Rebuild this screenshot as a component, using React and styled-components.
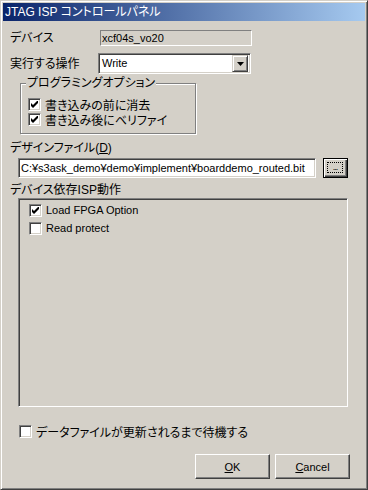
import React from 'react';
import styled, { createGlobalStyle } from 'styled-components';

const FONT = `"Liberation Sans", "Noto Sans CJK JP", sans-serif`;

const GlobalStyle = createGlobalStyle`
  html, body { margin: 0; padding: 0; background: #d4d0c8; }
  body {
    font-family: ${FONT};
    font-size: 12px;
    color: #000;
    font-feature-settings: "palt";
  }
  * { box-sizing: border-box; }
`;

const Window = styled.div`
  width: 368px;
  height: 490px;
  border: 1px solid;
  border-color: #d4d0c8 #404040 #404040 #d4d0c8;
  box-shadow: inset 1px 1px 0 #fff, inset -1px -1px 0 #808080;
  padding: 2px;
  background: #d4d0c8;
  display: flex;
  flex-direction: column;
`;

const TitleBar = styled.div`
  height: 18px;
  flex: none;
  display: flex;
  align-items: center;
  padding-left: 2px;
  color: #fff;
  font-size: 12px;
  line-height: 18px;
  background: linear-gradient(to right, #0a246a, #a6caf0);
`;

const Client = styled.div`
  display: flex;
  flex-direction: column;
`;

const FieldRow = styled.div`
  display: flex;
  align-items: center;
  margin: ${p => p.$top}px 0 0 7px;
`;

const Label = styled.div`
  width: ${p => p.$w}px;
  line-height: 14px;
  white-space: nowrap;
`;

const StaticField = styled.div`
  width: 152px;
  height: 16px;
  border: 1px solid;
  border-color: #808080 #fff #fff #808080;
  padding-left: 1px;
  font-size: 11px;
  line-height: 14px;
`;

const Combo = styled.div`
  width: 153px;
  height: 21px;
  display: flex;
  border: 1px solid;
  border-color: #808080 #fff #fff #808080;
  box-shadow: inset 1px 1px 0 #404040, inset -1px -1px 0 #d4d0c8;
  padding: 2px;
  background: #fff;
`;

const ComboText = styled.div`
  flex: 1;
  padding-left: 1px;
  font-size: 11px;
  line-height: 15px;
`;

const ComboButton = styled.div`
  width: 16px;
  height: 17px;
  margin: -1px 0 0 0;
  background: #d4d0c8;
  border: 1px solid;
  border-color: #d4d0c8 #404040 #404040 #d4d0c8;
  box-shadow: inset 1px 1px 0 #fff, inset -1px -1px 0 #808080;
  display: flex;
  align-items: center;
  justify-content: center;
`;

const Group = styled.fieldset`
  width: 176px;
  margin: 2px 0 0 17px;
  padding: 0 6px 6px 5px;
  border: 1px solid #808080;
  box-shadow: inset 1px 1px 0 #fff, 1px 1px 0 #fff;
  min-inline-size: 0;
`;

const Legend = styled.legend`
  padding: 0 1px;
  line-height: 14px;
  background: #d4d0c8;
`;

const OptionList = styled.div`
  display: flex;
  flex-direction: column;
  padding: 7px 0 0 2px;
`;

const CheckRow = styled.div`
  display: flex;
  align-items: center;
  gap: 4px;
  height: ${p => p.$h || 15}px;
  margin-left: ${p => p.$left || 0}px;
  margin-top: ${p => p.$top || 0}px;
  font-size: ${p => (p.$latin ? 11 : 12)}px;
  white-space: nowrap;
`;

const Box = styled.span`
  width: 13px;
  height: 13px;
  flex: none;
  border: 1px solid;
  border-color: #808080 #fff #fff #808080;
  box-shadow: inset 1px 1px 0 #404040, inset -1px -1px 0 #d4d0c8;
  background: #fff;
  display: flex;
  align-items: center;
  justify-content: center;
`;

const PathRow = styled.div`
  display: flex;
  gap: 7px;
  margin: 3px 0 0 15px;
`;

const TextBox = styled.div`
  width: 298px;
  height: 20px;
  border: 1px solid;
  border-color: #808080 #fff #fff #808080;
  box-shadow: inset 1px 1px 0 #404040, inset -1px -1px 0 #d4d0c8;
  background: #fff;
  padding: 1px 0 0 2px;
  font-size: 11px;
  line-height: 16px;
  white-space: nowrap;
  overflow: hidden;
`;

const BrowseButton = styled.div`
  width: 25px;
  height: 20px;
  border: 1px solid #000;
  box-shadow: inset 1px 1px 0 #fff, inset -1px -1px 0 #404040, inset -2px -2px 0 #808080;
  background: #d4d0c8;
  padding: 3px 4px 4px 3px;
`;

const FocusRect = styled.div`
  width: 100%;
  height: 100%;
  border: 1px dotted #000;
  display: flex;
  align-items: flex-end;
  justify-content: center;
  font-size: 9px;
  line-height: 9px;
  letter-spacing: -1px;
`;

const SectionLabel = styled.div`
  margin: ${p => p.$top}px 0 0 7px;
  line-height: 14px;
  white-space: nowrap;
`;

const ListBox = styled.div`
  width: 330px;
  height: 209px;
  margin: 1px 0 0 15px;
  border: 1px solid;
  border-color: #808080 #fff #fff #808080;
  box-shadow: inset 1px 1px 0 #404040, inset -1px -1px 0 #d4d0c8;
  padding: 2px 0 0 10px;
  display: flex;
  flex-direction: column;
`;

const ButtonRow = styled.div`
  display: flex;
  justify-content: flex-end;
  gap: 5px;
  padding-right: 15px;
  margin-top: 15px;
`;

const DialogButton = styled.div`
  width: 75px;
  height: 25px;
  border: 1px solid;
  border-color: #fff #404040 #404040 #fff;
  box-shadow: inset -1px -1px 0 #808080;
  display: flex;
  align-items: center;
  justify-content: center;
  font-size: 11px;
`;

const Check = () => (
  <svg width="7" height="7" viewBox="0 0 7 7">
    <path d="M0 2 L2 4 L6 0 L7 0 L7 2 L2 7 L0 5 Z" fill="#000" />
  </svg>
);

const CheckBox = ({ checked }) => <Box>{checked && <Check />}</Box>;

export default function App() {
  return (
    <>
      <GlobalStyle />
      <Window>
        <TitleBar>JTAG ISP コントロールパネル</TitleBar>
        <Client>
          <FieldRow $top={9}>
            <Label $w={90}>デバイス</Label>
            <StaticField>xcf04s_vo20</StaticField>
          </FieldRow>
          <FieldRow $top={7}>
            <Label $w={88}>実行する操作</Label>
            <Combo>
              <ComboText>Write</ComboText>
              <ComboButton>
                <svg width="7" height="4" viewBox="0 0 7 4">
                  <path d="M0 0 H7 L3.5 4 Z" fill="#000" />
                </svg>
              </ComboButton>
            </Combo>
          </FieldRow>
          <Group>
            <Legend>プログラミングオプション</Legend>
            <OptionList>
              <CheckRow>
                <CheckBox checked />
                書き込みの前に消去
              </CheckRow>
              <CheckRow>
                <CheckBox checked />
                書き込み後にベリファイ
              </CheckRow>
            </OptionList>
          </Group>
          <SectionLabel $top={7}>
            デザインファイル(<u>D</u>)
          </SectionLabel>
          <PathRow>
            <TextBox>C:¥s3ask_demo¥demo¥implement¥boarddemo_routed.bit</TextBox>
            <BrowseButton>
              <FocusRect>...</FocusRect>
            </BrowseButton>
          </PathRow>
          <SectionLabel $top={5}>デバイス依存ISP動作</SectionLabel>
          <ListBox>
            <CheckRow $h={18} $latin>
              <CheckBox checked />
              Load FPGA Option
            </CheckRow>
            <CheckRow $h={18} $latin>
              <CheckBox />
              Read protect
            </CheckRow>
          </ListBox>
          <CheckRow $left={16} $top={17}>
            <CheckBox />
            データファイルが更新されるまで待機する
          </CheckRow>
          <ButtonRow>
            <DialogButton>
              <span><u>O</u>K</span>
            </DialogButton>
            <DialogButton>
              <span><u>C</u>ancel</span>
            </DialogButton>
          </ButtonRow>
        </Client>
      </Window>
    </>
  );
}
